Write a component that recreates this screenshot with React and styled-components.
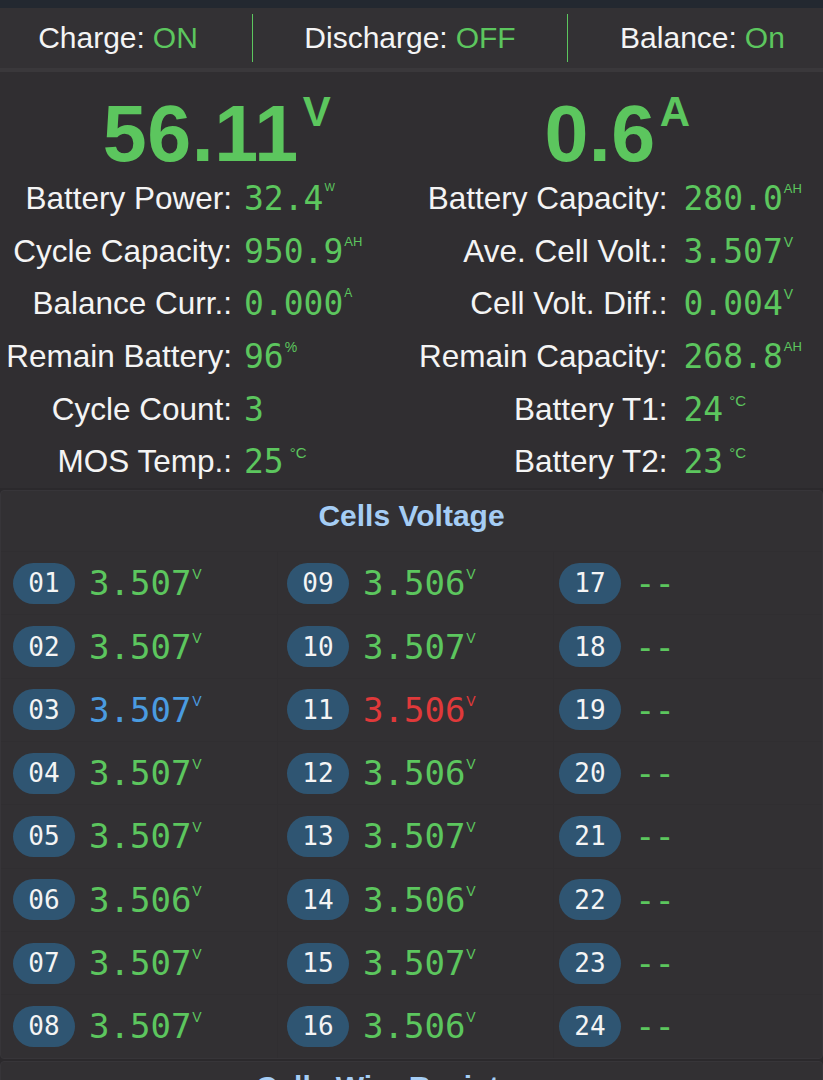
import React from "react";
import styled, { createGlobalStyle } from "styled-components";

const GlobalStyle = createGlobalStyle`
  body {
    margin: 0;
    background: #2b292c;
    font-family: "Liberation Sans", Arial, sans-serif;
  }
`;

const GREEN = "#5cc65e";

const Page = styled.div`
  width: 823px;
  background: #2b292c;
  border-top: 8px solid #232830;
`;

const StatusBar = styled.div`
  display: grid;
  grid-template-columns: 252px 315px 1fr;
  height: 60px;
  background: #333134;
  border-bottom: 4px solid #3a383b;
`;

const StatusItem = styled.div`
  display: flex;
  align-items: center;
  justify-content: center;
  font-size: 30px;
  color: #f4f4f4;
  padding-left: ${(p) => p.$shift || 0}px;
  padding-right: ${(p) => p.$pull || 0}px;
  border-left: ${(p) => (p.$divider ? `1px solid ${GREEN}` : "none")};
  margin: ${(p) => (p.$divider ? "6px 0" : "0")};
`;

const Green = styled.span`
  color: ${GREEN};
  margin-left: 8px;
`;

const StatsPanel = styled.div`
  display: grid;
  grid-template-columns: 1fr 1fr;
  background: #302e31;
`;

const StatsColumn = styled.div`
  display: flex;
  flex-direction: column;
`;

const BigValue = styled.div`
  display: flex;
  justify-content: center;
  align-items: flex-start;
  height: 100px;
  padding-top: 22px;
  box-sizing: border-box;
  padding-left: ${(p) => p.$shift || 0}px;
  color: ${GREEN};
  font-weight: bold;
`;

const BigNumber = styled.span`
  font-size: 79px;
  line-height: 1;
  letter-spacing: 0.5px;
`;

const BigUnit = styled.span`
  font-size: 42px;
  line-height: 1;
  margin-top: -3px;
  margin-left: 4px;
`;

const StatRow = styled.div`
  display: grid;
  grid-template-columns: ${(p) => p.$labelWidth}px 1fr;
  column-gap: ${(p) => p.$gap}px;
  align-items: center;
  height: 52.7px;
`;

const Label = styled.div`
  text-align: right;
  font-size: 31.5px;
  color: #f4f4f4;
  white-space: nowrap;
`;

const Value = styled.div`
  display: flex;
  align-items: flex-start;
  color: ${(p) => p.$color || GREEN};
`;

const Mono = styled.span`
  font-family: "DejaVu Sans Mono", monospace;
  font-size: ${(p) => p.$size}px;
  line-height: 1;
  letter-spacing: ${(p) => p.$spacing || 0}px;
`;

const Unit = styled.span`
  font-family: "Liberation Sans", Arial, sans-serif;
  font-size: ${(p) => p.$size}px;
  line-height: 1;
  margin-left: ${(p) => p.$gap || 1}px;
  margin-top: ${(p) => p.$top || 0}px;
`;

const Panel = styled.section`
  margin-top: 2px;
  background: #323033;
  border: 1px solid #373539;
  border-radius: 4px;
`;

const PanelTitle = styled.h2`
  margin: 0;
  height: 60px;
  box-sizing: border-box;
  padding-top: 7px;
  display: flex;
  justify-content: center;
  font-size: 30px;
  line-height: 1.2;
  font-weight: bold;
  color: #a5cdf5;
`;

const CellGrid = styled.div`
  display: grid;
  grid-template-columns: 276px 276px 1fr;
  grid-auto-flow: column;
  grid-template-rows: repeat(8, 63.3px);
`;

const Cell = styled.div`
  display: flex;
  align-items: center;
  gap: 14px;
  padding-left: ${(p) => p.$pad}px;
  border-top: 1px solid #302e31;
  border-left: ${(p) => (p.$first ? "none" : "1px solid #302e31")};
`;

const Badge = styled.span`
  display: flex;
  align-items: center;
  justify-content: center;
  width: 62px;
  height: 41px;
  border-radius: 21px;
  background: #2f5572;
  color: #f4f4f4;
  font-family: "DejaVu Sans Mono", monospace;
  font-size: 26px;
`;

const leftStats = [
  ["Battery Power:", "32.4", "W", 11],
  ["Cycle Capacity:", "950.9", "AH", 13],
  ["Balance Curr.:", "0.000", "A", 12],
  ["Remain Battery:", "96", "%", 14],
  ["Cycle Count:", "3", "", 12],
  ["MOS Temp.:", "25", "°C", 15],
];

const rightStats = [
  ["Battery Capacity:", "280.0", "AH", 13],
  ["Ave. Cell Volt.:", "3.507", "V", 14],
  ["Cell Volt. Diff.:", "0.004", "V", 14],
  ["Remain Capacity:", "268.8", "AH", 13],
  ["Battery T1:", "24", "°C", 15],
  ["Battery T2:", "23", "°C", 15],
];

const cells = [
  "3.507", "3.507", "3.507", "3.507", "3.507", "3.506", "3.507", "3.507",
  "3.506", "3.507", "3.506", "3.506", "3.507", "3.506", "3.507", "3.506",
];

function cellColor(i) {
  if (i === 2) return "#4a9be0";
  if (i === 10) return "#e0393a";
  return GREEN;
}

function StatList({ rows, labelWidth, gap }) {
  return rows.map(([label, value, unit, size]) => (
    <StatRow key={label} $labelWidth={labelWidth} $gap={gap}>
      <Label>{label}</Label>
      <Value>
        <Mono $size={33}>{value}</Mono>
        {unit && (
          <Unit $size={size} $gap={unit.startsWith("°") ? 6 : 1}>
            {unit}
          </Unit>
        )}
      </Value>
    </StatRow>
  ));
}

export default function App() {
  const pad = [12, 9, 5];
  return (
    <Page>
      <GlobalStyle />
      <StatusBar>
        <StatusItem $pull={16}>
          Charge:<Green>ON</Green>
        </StatusItem>
        <StatusItem $divider>
          Discharge:<Green>OFF</Green>
        </StatusItem>
        <StatusItem $divider $shift={14}>
          Balance:<Green>On</Green>
        </StatusItem>
      </StatusBar>

      <StatsPanel>
        <StatsColumn>
          <BigValue $shift={22}>
            <BigNumber>56.11</BigNumber>
            <BigUnit>V</BigUnit>
          </BigValue>
          <StatList rows={leftStats} labelWidth={232} gap={12} />
        </StatsColumn>
        <StatsColumn>
          <BigValue $shift={0}>
            <BigNumber>0.6</BigNumber>
            <BigUnit>A</BigUnit>
          </BigValue>
          <StatList rows={rightStats} labelWidth={256} gap={16} />
        </StatsColumn>
      </StatsPanel>

      <Panel>
        <PanelTitle>Cells Voltage</PanelTitle>
        <CellGrid>
          {Array.from({ length: 24 }, (_, i) => {
            const col = Math.floor(i / 8);
            const v = cells[i];
            return (
              <Cell key={i} $pad={pad[col]} $first={col === 0}>
                <Badge>{String(i + 1).padStart(2, "0")}</Badge>
                <Value $color={cellColor(i)}>
                  {v ? (
                    <>
                      <Mono $size={34}>{v}</Mono>
                      <Unit $size={14} $top={1}>V</Unit>
                    </>
                  ) : (
                    <Mono $size={34} $spacing={-1}>--</Mono>
                  )}
                </Value>
              </Cell>
            );
          })}
        </CellGrid>
      </Panel>

      <Panel>
        <PanelTitle>Cells Wire Resistance</PanelTitle>
      </Panel>
    </Page>
  );
}
